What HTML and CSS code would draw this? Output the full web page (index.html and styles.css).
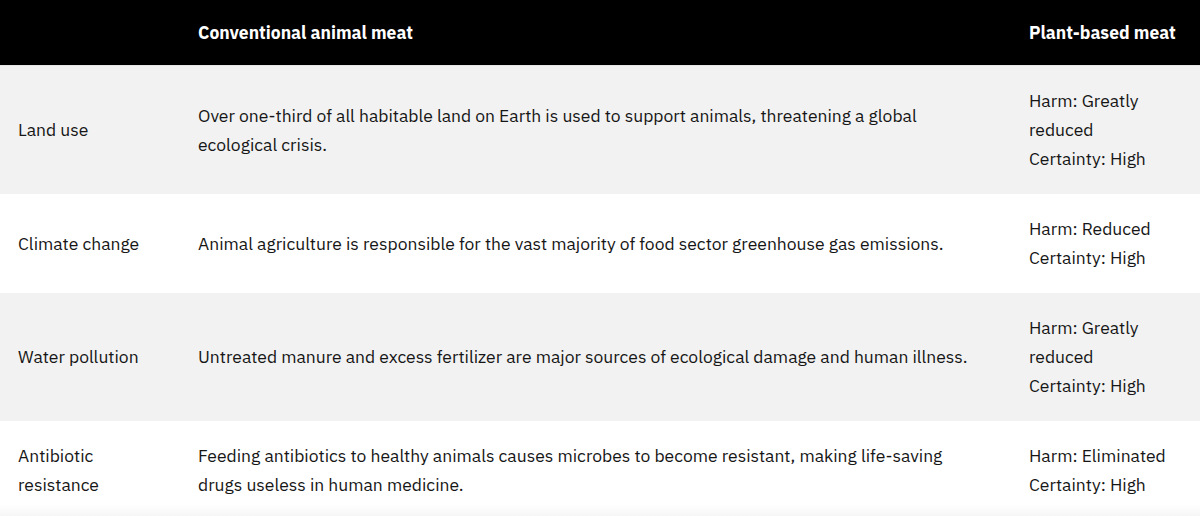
FILE: index.html
```html
<!DOCTYPE html>
<html lang="en">
<head>
<meta charset="utf-8">
<title>Meat comparison</title>
<link rel="stylesheet" href="styles.css">
</head>
<body>
<div class="table">
  <div class="row head">
    <div class="cell c1"></div>
    <div class="cell c2">Conventional animal meat</div>
    <div class="cell c3">Plant-based meat</div>
  </div>
  <div class="row gray">
    <div class="cell c1">Land use</div>
    <div class="cell c2">Over one-third of all habitable land on Earth is used to support animals, threatening a global ecological crisis.</div>
    <div class="cell c3">Harm: Greatly reduced<br>Certainty: High</div>
  </div>
  <div class="row">
    <div class="cell c1">Climate change</div>
    <div class="cell c2">Animal agriculture is responsible for the vast majority of food sector greenhouse gas emissions.</div>
    <div class="cell c3">Harm: Reduced<br>Certainty: High</div>
  </div>
  <div class="row gray">
    <div class="cell c1">Water pollution</div>
    <div class="cell c2">Untreated manure and excess fertilizer are major sources of ecological damage and human illness.</div>
    <div class="cell c3">Harm: Greatly reduced<br>Certainty: High</div>
  </div>
  <div class="row">
    <div class="cell c1">Antibiotic resistance</div>
    <div class="cell c2">Feeding antibiotics to healthy animals causes microbes to become resistant, making life-saving drugs useless in human medicine.</div>
    <div class="cell c3">Harm: Eliminated<br>Certainty: High</div>
  </div>
</div>
<div class="fade"></div>
</body>
</html>
```
FILE: styles.css
```css
html, body {
  margin: 0;
  padding: 0;
  background: #ffffff;
}
body {
  font-family: "IBM Plex Sans", Roboto, "Liberation Sans", sans-serif;
  font-size: 17.5px;
  line-height: 29px;
  color: #161616;
  overflow: hidden;
  height: 516px;
  position: relative;
}
.table {
  width: 1200px;
}
.row {
  display: grid;
  grid-template-columns: 180px 831px 189px;
  align-items: center;
  background: #ffffff;
}
.row.gray {
  background: #f2f2f2;
}
.row.head {
  background: #000000;
  color: #ffffff;
  font-weight: 700;
  height: 65px;
  border-bottom: 1px solid #e6e6e6;
}
.cell {
  padding: 20px 18px 21px 18px;
}
.head .cell {
  padding: 0 18px;
}
.c2 {
  padding-right: 32px;
}
.fade {
  position: absolute;
  left: 0;
  right: 0;
  bottom: 0;
  height: 12px;
  background: linear-gradient(to bottom, rgba(0,0,0,0), rgba(0,0,0,0.035));
}
```
